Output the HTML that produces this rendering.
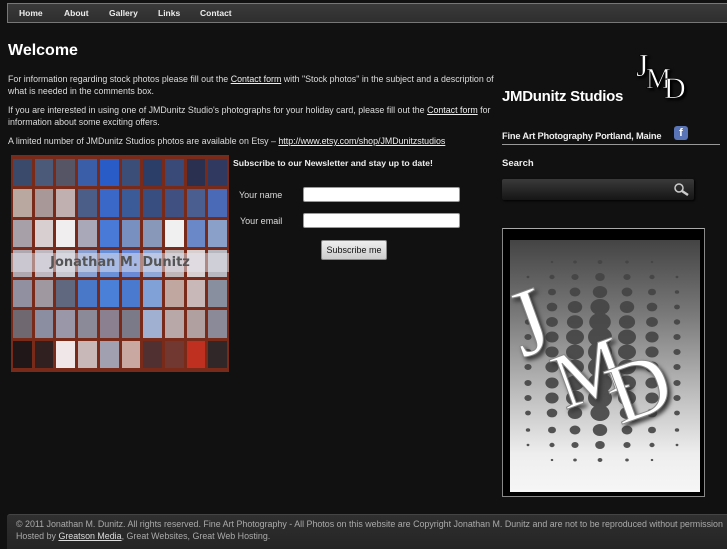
<!DOCTYPE html>
<html><head><style>
*{margin:0;padding:0;box-sizing:border-box}
body{width:727px;height:545px;background:#111;font-family:"Liberation Sans",sans-serif;color:#ddd;position:relative;overflow:hidden;font-size:9px}
.abs{position:absolute}
#nav{left:7px;top:3px;width:730px;height:20px;background:linear-gradient(#3a3a3a,#2e2e2e);border:1px solid #777;border-right:none}
#nav span{position:absolute;top:4px;font-weight:bold;color:#eee;font-size:8.5px}
h1{position:absolute;left:8px;top:42px;font-size:16px;color:#fff;font-weight:bold}
p{position:absolute;left:8px;width:492px;line-height:12px;font-size:8.85px;color:#ddd}
u{color:#eee}
#photo{left:11px;top:155px;width:218px;height:217px;background:#7a2a18;display:grid;grid-template-columns:repeat(10,1fr);grid-template-rows:repeat(7,1fr);gap:3px;padding:4px 2px}
#photo div{background:#8fa0b8}
input{position:absolute;height:15px;background:#fff;border:1px solid #999;border-radius:2px}
#btn{left:321px;top:240px;width:66px;height:20px;background:linear-gradient(#eee,#ccc);border:1px solid #888;border-radius:2px;color:#111;font-size:9px;text-align:center;line-height:18px}
#foot{left:7px;top:514px;width:730px;height:35px;background:linear-gradient(#303030,#242424);border-top:1px solid #444;border-radius:3px 0 0 0;color:#aaa;font-size:8.9px;line-height:12px;padding:3px 0 0 9px;white-space:nowrap}
</style></head><body>
<div id="nav" class="abs">
<span style="left:11px">Home</span><span style="left:56px">About</span><span style="left:101px">Gallery</span><span style="left:150px">Links</span><span style="left:192px">Contact</span>
</div>
<h1>Welcome</h1>
<p style="top:73px">For information regarding stock photos please fill out the <u>Contact form</u> with "Stock photos" in the subject and a description of what is needed in the comments box.</p>
<p style="top:104px">If you are interested in using one of JMDunitz Studio's photographs for your holiday card, please fill out the <u>Contact form</u> for information about some exciting offers.</p>
<p style="top:135px">A limited number of JMDunitz Studios photos are available on Etsy – <u>http://www.etsy.com/shop/JMDunitzstudios</u></p>
<div id="photo" class="abs">
<div style="background:#3a4a6a"></div><div style="background:#4a5a78"></div><div style="background:#556"></div><div style="background:#3a5fa8"></div><div style="background:#2a5cc8"></div><div style="background:#3a4e78"></div><div style="background:#2a3e68"></div><div style="background:#3a4a78"></div><div style="background:#2a3050"></div><div style="background:#303a60"></div>
<div style="background:#b8a8a0"></div><div style="background:#a89898"></div><div style="background:#c0b0b0"></div><div style="background:#4a5e88"></div><div style="background:#3a68c8"></div><div style="background:#3a5a98"></div><div style="background:#384e80"></div><div style="background:#405080"></div><div style="background:#4a5f8f"></div><div style="background:#4a6ab8"></div>
<div style="background:#a8a0a8"></div><div style="background:#d8d0d0"></div><div style="background:#f0eeee"></div><div style="background:#a8a8b8"></div><div style="background:#4a7ad8"></div><div style="background:#7890c0"></div><div style="background:#8898b8"></div><div style="background:#f0f0f0"></div><div style="background:#6a88c8"></div><div style="background:#8aa0c8"></div>
<div style="background:#b0a8b0"></div><div style="background:#c0b8c0"></div><div style="background:#c8c8d0"></div><div style="background:#8aa0d0"></div><div style="background:#6a90d8"></div><div style="background:#6a8ad8"></div><div style="background:#90a8d8"></div><div style="background:#c0b8b8"></div><div style="background:#d8d0d0"></div><div style="background:#b8b8c0"></div>
<div style="background:#9090a0"></div><div style="background:#a098a0"></div><div style="background:#606880"></div><div style="background:#4a78c8"></div><div style="background:#4a80d8"></div><div style="background:#4a7ad0"></div><div style="background:#80a0d8"></div><div style="background:#c0a8a0"></div><div style="background:#c8b8b8"></div><div style="background:#8890a0"></div>
<div style="background:#706870"></div><div style="background:#8a8ea0"></div><div style="background:#9a98a8"></div><div style="background:#8a8a98"></div><div style="background:#8a8090"></div><div style="background:#7a7a88"></div><div style="background:#a0b0d0"></div><div style="background:#b8a8a8"></div><div style="background:#b0a0a0"></div><div style="background:#8a8a98"></div>
<div style="background:#201818"></div><div style="background:#302020"></div><div style="background:#f0e8e8"></div><div style="background:#c8b8b8"></div><div style="background:#a0a0b0"></div><div style="background:#c8a8a0"></div><div style="background:#503030"></div><div style="background:#703830"></div><div style="background:#c03020"></div><div style="background:#302828"></div>
</div>
<div class="abs" style="left:11px;top:253px;width:218px;height:19px;background:rgba(230,230,240,.5);color:#555;font-weight:bold;font-size:13px;text-align:center;line-height:19px;font-family:'DejaVu Sans',sans-serif">Jonathan M. Dunitz</div>
<div class="abs" style="left:233px;top:158px;font-weight:bold;font-size:8.7px;color:#eee">Subscribe to our Newsletter and stay up to date!</div>
<div class="abs" style="left:239px;top:190px;font-size:9px">Your name</div>
<div class="abs" style="left:240px;top:216px;font-size:9px">Your email</div>
<input style="left:303px;top:187px;width:157px">
<input style="left:303px;top:213px;width:157px">
<div id="btn" class="abs">Subscribe me</div>
<div class="abs" style="left:502px;top:88px;font-size:15px;font-weight:bold;color:#fff;letter-spacing:-.3px">JMDunitz Studios</div>
<svg class="abs" style="left:632px;top:48px" width="62" height="56">
<g font-family="Liberation Serif" fill="#fff" stroke="#000" stroke-width=".6" style="filter:drop-shadow(2px 2px 1px #000)">
<text x="4" y="28" font-size="32">J</text>
<text x="14" y="40" font-size="28">M</text>
<text x="32" y="50" font-size="30">D</text>
</g></svg>
<div class="abs" style="left:502px;top:131px;font-weight:bold;font-size:9.3px;color:#eee;letter-spacing:-.2px">Fine Art Photography Portland, Maine</div>
<div class="abs" style="left:674px;top:126px;width:14px;height:14px;background:#5a74b8;border-radius:3px;color:#fff;font-weight:bold;font-size:11px;text-align:center;line-height:15px">f</div>
<div class="abs" style="left:502px;top:144px;width:218px;height:1px;background:#999"></div>
<div class="abs" style="left:502px;top:158px;font-weight:bold;font-size:9.5px;color:#eee">Search</div>
<div class="abs" style="left:502px;top:179px;width:192px;height:21px;background:linear-gradient(#3a3a3a,#151515);border-radius:2px;box-shadow:1px 1px 2px #000"></div>
<svg class="abs" style="left:673px;top:182px" width="18" height="15"><circle cx="6" cy="6" r="4" fill="none" stroke="#ccc" stroke-width="1.5"/><line x1="9" y1="9" x2="15" y2="13" stroke="#ccc" stroke-width="2.5"/></svg>
<div class="abs" style="left:502px;top:228px;width:203px;height:269px;background:#000;border:1px solid #888;border-top-color:#aaa"></div>
<div class="abs" style="left:510px;top:240px;width:190px;height:252px;background:linear-gradient(#444,#7a7a7a 30%,#bbb 60%,#eee 85%,#f6f6f6)"></div>
<svg class="abs" style="left:510px;top:240px" width="190" height="252" id="dots">
<g fill="#444" opacity=".9" id="dg"></g>
<g font-family="Liberation Serif" fill="#fff" stroke="#888" stroke-width="1" style="filter:drop-shadow(3px 3px 2px #333)">
<text x="0" y="0" font-size="95" transform="translate(12 118) rotate(-20)">J</text>
<text x="0" y="0" font-size="80" transform="translate(55 170) rotate(-20)">M</text>
<text x="0" y="0" font-size="85" transform="translate(110 185) rotate(-20)">D</text>
</g>
</svg>
<script>
(function(){var g=document.getElementById('dg'),cols=[18,42,65,90,117,142,167],rows=[22,37,52,67,82,97,112,127,143,158,173,190,205,220],cr=[2,4,6,8,9,10,10,10,10,10,8,6,4,2],sc=[1,.75,.55,.3],s='';
rows.forEach(function(y,i){cols.forEach(function(x,j){var d=Math.abs(j-3);var r=cr[i]*sc[d];if(r>=1)s+='<ellipse cx="'+x+'" cy="'+y+'" rx="'+(r*1.2).toFixed(1)+'" ry="'+r.toFixed(1)+'"/>';});});g.innerHTML=s;})();
</script>
<div id="foot" class="abs">© 2011 Jonathan M. Dunitz. All rights reserved. Fine Art Photography - All Photos on this website are Copyright Jonathan M. Dunitz and are not to be reproduced without permission<br>Hosted by <u style="color:#ddd">Greatson Media</u>, Great Websites, Great Web Hosting.</div>
</body></html>
